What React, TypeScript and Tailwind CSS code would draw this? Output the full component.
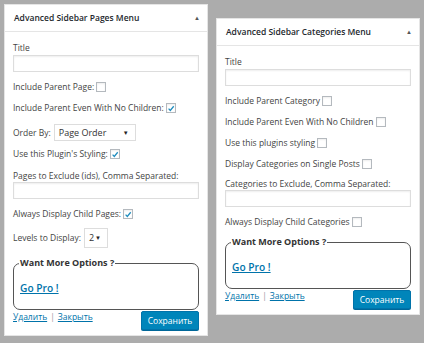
import React from "react";

function Checkbox({ checked }: { checked?: boolean }) {
  return (
    <span className="inline-flex w-[10px] h-[10px] border border-[#b4b9be] bg-white items-center justify-center ml-[2px] shadow-[inset_0_1px_2px_rgba(0,0,0,0.07)]">
      {checked && (
        <svg viewBox="0 0 10 10" className="w-[9px] h-[9px]">
          <path d="M2 5.2 L4.1 7.4 L8.4 2.2" fill="none" stroke="#1e8cbe" strokeWidth="1.6" />
        </svg>
      )}
    </span>
  );
}

function Row({ label, checked, mt }: { label: string; checked?: boolean; mt: string }) {
  return (
    <div className={`flex items-center h-[12px] ${mt}`}>
      <span>{label}</span>
      <Checkbox checked={checked} />
    </div>
  );
}

function Input({ mt }: { mt: string }) {
  return <div className={`h-[17px] border border-[#ddd] bg-white shadow-[inset_0_1px_2px_rgba(0,0,0,0.07)] ${mt}`} />;
}

function Select({ value, w }: { value: string; w: string }) {
  return (
    <div className={`flex items-center justify-between border border-[#ddd] bg-white pl-[4px] pr-[6px] ${w}`}>
      <span className="text-[9px] text-[#333]">{value}</span>
      <span className="text-[6px] text-[#222]">▼</span>
    </div>
  );
}

function Footer({ mt }: { mt: string }) {
  return (
    <>
      <fieldset className={`border border-[#555] rounded-[7px] px-[6px] pb-[14px] ${mt}`}>
        <legend className="font-bold text-[9px] text-[#333] px-[1px] ml-[-1px] leading-[12px]">
          Want More Options ?
        </legend>
        <a className="block mt-[12px] text-[10.2px] font-semibold text-[#0073aa] underline leading-[14px]">
          Go Pro !
        </a>
      </fieldset>
      <div className="flex justify-between items-start">
        <div className="text-[8.5px] mt-[1px] text-[#0073aa] leading-[12px]">
          <span className="underline">Удалить</span>
          <span className="text-[#999] mx-[3px]">|</span>
          <span className="underline">Закрыть</span>
        </div>
        <button className="mt-[1px] w-[58px] h-[19px] bg-[#0085ba] border border-[#0073aa] rounded-[2px] text-white text-[8.5px] shadow-[0_1px_0_#006799]">
          Сохранить
        </button>
      </div>
    </>
  );
}

function Header({ title, h }: { title: string; h: string }) {
  return (
    <div className={`flex items-center justify-between pl-[9px] pr-[7px] border-b border-[#e5e5e5] ${h}`}>
      <span className="font-semibold text-[8.5px] text-[#23282d]">{title}</span>
      <span className="text-[6px] text-[#555]">▲</span>
    </div>
  );
}

export default function App() {
  return (
    <div
      className="w-[424px] h-[343px] bg-[#acacac] flex items-start text-[8.5px] text-[#444] leading-[12px]"
      style={{ fontFamily: '"Open Sans", "Noto Sans", sans-serif' }}
    >
      <div className="ml-[4px] mt-[4px] w-[204px] h-[332px] bg-white border border-[#e5e5e5]">
        <Header title="Advanced Sidebar Pages Menu" h="h-[27px]" />
        <div className="px-[8px] flex flex-col">
          <div className="mt-[10px] h-[12px]">Title</div>
          <Input mt="mt-[1px]" />
          <Row label="Include Parent Page:" mt="mt-[9px]" />
          <Row label="Include Parent Even With No Children:" checked mt="mt-[9px]" />
          <div className="flex items-center mt-[10px]">
            <span className="mr-[3px]">Order By:</span>
            <Select value="Page Order" w="w-[82px] h-[17px]" />
          </div>
          <Row label="Use this Plugin's Styling:" checked mt="mt-[7px]" />
          <div className="mt-[10px] h-[12px]">Pages to Exclude (ids), Comma Separated:</div>
          <Input mt="mt-[0px]" />
          <Row label="Always Display Child Pages:" checked mt="mt-[9px]" />
          <div className="flex items-center mt-[8px]">
            <span className="mr-[3px]">Levels to Display:</span>
            <Select value="2" w="w-[24px] h-[20px]" />
          </div>
          <Footer mt="mt-[9px]" />
        </div>
      </div>
      <div className="ml-[8px] mt-[18px] w-[204px] h-[297px] bg-white border border-[#e5e5e5]">
        <Header title="Advanced Sidebar Categories Menu" h="h-[27px]" />
        <div className="px-[8px] flex flex-col">
          <div className="mt-[10px] h-[12px]">Title</div>
          <Input mt="mt-[1px]" />
          <Row label="Include Parent Category" mt="mt-[9px]" />
          <Row label="Include Parent Even With No Children" mt="mt-[9px]" />
          <Row label="Use this plugins styling" mt="mt-[9px]" />
          <Row label="Display Categories on Single Posts" mt="mt-[9px]" />
          <div className="mt-[8px] h-[12px]">Categories to Exclude, Comma Separated:</div>
          <Input mt="mt-[0px]" />
          <Row label="Always Display Child Categories" mt="mt-[9px]" />
          <Footer mt="mt-[8px]" />
        </div>
      </div>
    </div>
  );
}
